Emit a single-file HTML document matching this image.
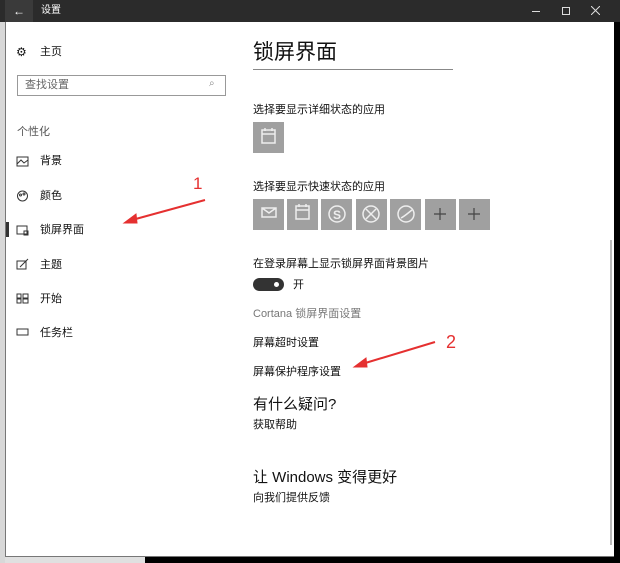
<!DOCTYPE html><html><head><meta charset="utf-8"><style>
body{margin:0;width:620px;height:563px;overflow:hidden;background:#000;position:relative;font-family:"Liberation Sans","Noto Sans CJK SC",sans-serif;color:#111}
.a{position:absolute;white-space:nowrap;line-height:1}
.s{font-size:11px}
.tile{position:absolute;width:31px;height:31px;background:#a0a0a0;top:199px}
</style></head><body>
<div class="a" style="left:0;top:0;width:620px;height:22px;background:#2b2b2b"></div>
<div class="a" style="left:0;top:22px;width:5px;height:541px;background:#d8d8d8"></div>
<div class="a" style="left:5px;top:557px;width:140px;height:6px;background:#e0e0e0"></div>
<div class="a" style="left:5px;top:22px;width:609px;height:535px;background:#fff;border-left:1px solid #777;border-bottom:1px solid #777;box-sizing:border-box"></div>
<div class="a" style="left:5px;top:0;width:28px;height:22px;background:#3a3a3a"></div>
<div class="a" style="left:13px;top:5px;color:#fff;font-size:12px">←</div>
<div class="a" style="left:41px;top:6px;color:#fff;font-size:10px">设置</div>
<div class="a" style="left:532px;top:11px;width:8px;height:1px;background:#ddd"></div>
<div class="a" style="left:562px;top:7px;width:6px;height:6px;border:1px solid #ddd"></div>
<svg class="a" style="left:591px;top:6px" width="9" height="9" stroke="#ddd"><path d="M0 0l9 9M9 0L0 9"/></svg>
<div class="a" style="left:610px;top:240px;width:2px;height:305px;background:#bbb"></div>
<!-- sidebar -->
<div class="a s" style="left:16px;top:46px;font-size:12px">⚙</div>
<div class="a s" style="left:40px;top:47px">主页</div>
<div class="a" style="left:17px;top:75px;width:209px;height:21px;border:1px solid #999;box-sizing:border-box"></div>
<div class="a s" style="left:25px;top:80px;color:#666">查找设置</div>
<div class="a" style="left:209px;top:79px;font-size:10px;color:#888">⌕</div>
<div class="a s" style="left:17px;top:127px;color:#555">个性化</div>
<svg class="a" style="left:16px;top:156px" width="14" height="190" fill="none" stroke="#333" stroke-width="1">
<rect x="1" y="1" width="11" height="9"/><path d="M1 8l4-4 3 3 4-3"/>
<circle cx="6.5" cy="40" r="5"/><circle cx="4.5" cy="39" r="1"/><circle cx="8" cy="38" r="1"/>
<rect x="1" y="70" width="10" height="8"/><rect x="8" y="75" width="4" height="4"/>
<path d="M1 105h9v8H1zM4 111l8-8"/>
<rect x="1" y="138" width="4" height="4"/><rect x="7" y="138" width="5" height="4"/><rect x="1" y="143" width="4" height="4"/><rect x="7" y="143" width="5" height="4"/>
<rect x="1" y="173" width="11" height="6"/>
</svg>
<div class="a" style="left:6px;top:222px;width:3px;height:15px;background:#333"></div>
<div class="a s" style="left:40px;top:156px">背景</div>
<div class="a s" style="left:40px;top:191px">颜色</div>
<div class="a s" style="left:40px;top:225px">锁屏界面</div>
<div class="a s" style="left:40px;top:260px">主题</div>
<div class="a s" style="left:40px;top:294px">开始</div>
<div class="a s" style="left:40px;top:328px">任务栏</div>
<!-- main -->
<div class="a" style="left:253px;top:42px;font-size:21px">锁屏界面</div>
<div class="a" style="left:253px;top:69px;width:200px;height:1px;background:#888"></div>
<div class="a s" style="left:253px;top:105px">选择要显示详细状态的应用</div>
<div class="tile" style="left:253px;top:122px"></div>
<div class="a s" style="left:253px;top:182px">选择要显示快速状态的应用</div>
<div class="tile" style="left:253px"></div><div class="tile" style="left:287px"></div><div class="tile" style="left:321px"></div><div class="tile" style="left:356px"></div><div class="tile" style="left:390px"></div><div class="tile" style="left:425px"></div><div class="tile" style="left:459px"></div>
<svg class="a" style="left:253px;top:122px" width="240" height="110" fill="none" stroke="#eee" stroke-width="1.5">
<rect x="9" y="8" width="13" height="13"/><path d="M9 12h13M12 6v3M19 6v3"/>
<path d="M9 86h14v9H9zM9 86l7 5 7-5"/>
<rect x="43" y="84" width="13" height="13"/><path d="M43 88h13M46 82v3M53 82v3"/>
<circle cx="84" cy="92" r="8"/><text x="80" y="97" fill="#eee" stroke="none" font-size="12" font-family="Liberation Sans" font-weight="bold">S</text>
<circle cx="118" cy="92" r="8"/><path d="M113 87l10 10M123 87l-10 10"/>
<circle cx="153" cy="92" r="8"/><path d="M148 96c4-2 7-5 11-8"/>
</svg>
<svg class="a" style="left:253px;top:122px" width="240" height="110" fill="none" stroke="#444" stroke-width="1.2">
<path d="M187 86v12M181 92h12M221 86v12M215 92h12"/>
</svg>
<div class="a s" style="left:253px;top:259px">在登录屏幕上显示锁屏界面背景图片</div>
<div class="a" style="left:253px;top:278px;width:31px;height:13px;border-radius:7px;background:#333"></div>
<div class="a" style="left:274px;top:282px;width:5px;height:5px;border-radius:3px;background:#fff"></div>
<div class="a s" style="left:293px;top:280px">开</div>
<div class="a s" style="left:253px;top:309px;color:#777">Cortana 锁屏界面设置</div>
<div class="a s" style="left:253px;top:338px">屏幕超时设置</div>
<div class="a s" style="left:253px;top:367px">屏幕保护程序设置</div>
<div class="a" style="left:253px;top:397px;font-size:15px">有什么疑问?</div>
<div class="a s" style="left:253px;top:420px">获取帮助</div>
<div class="a" style="left:253px;top:470px;font-size:15px">让 Windows 变得更好</div>
<div class="a s" style="left:253px;top:493px">向我们提供反馈</div>
<!-- annotations -->
<div class="a" style="left:193px;top:175px;color:#e53030;font-size:17px">1</div>
<div class="a" style="left:446px;top:333px;color:#e53030;font-size:18px">2</div>
<svg class="a" style="left:0;top:0" width="620" height="563"><g fill="#e53030" stroke="#e53030">
<path d="M205 200L132 220" stroke-width="2"/><path d="M124 223l12-9 1 9z"/>
<path d="M435 342L362 364" stroke-width="2"/><path d="M354 367l12-9 1 9z"/></g></svg>
</body></html>
